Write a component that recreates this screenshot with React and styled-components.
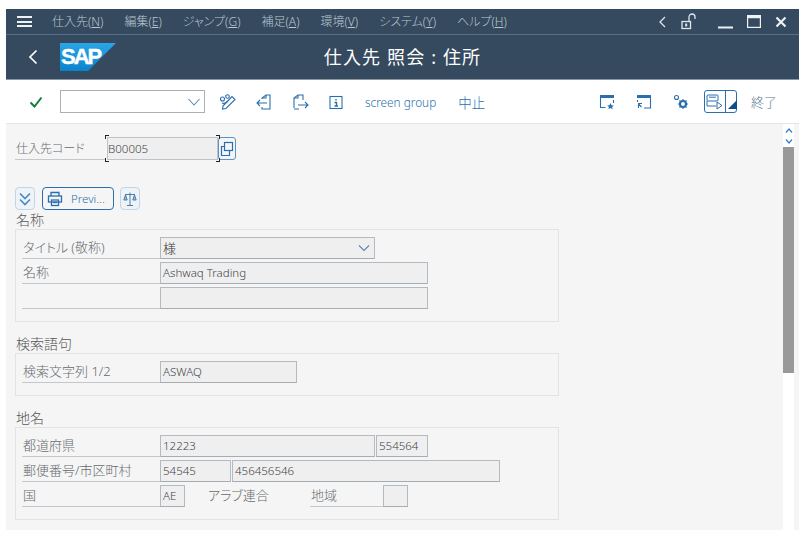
import styled, {createGlobalStyle} from 'styled-components';

const GlobalStyle = createGlobalStyle`
    html, body {
        margin: 0;
        padding: 0;
        background: #fff;
        font-family: "Noto Sans", "Noto Sans CJK JP", sans-serif;
        font-feature-settings: "palt";
    }
`;

const BLUE = "#2a6fad";

const Icon = ({w = 18, h = 18, vb = "0 0 18 18", color = BLUE, sw = 1.1, children}) => (
    <svg width={w} height={h} viewBox={vb} fill="none" stroke={color} strokeWidth={sw}>{children}</svg>
);

const menus = [["仕入先", "N"], ["編集", "E"], ["ジャンプ", "G"], ["補足", "A"], ["環境", "V"], ["システム", "Y"], ["ヘルプ", "H"]];

const App = () => {
    return (
        <Page>
            <GlobalStyle/>
            <Header>
                <MenuBar>
                    <Burger><i/><i/><i/></Burger>
                    <Menus>
                        {menus.map(([name, key]) => (
                            <MenuItem key={key}>{name}(<u>{key}</u>)</MenuItem>
                        ))}
                    </Menus>
                    <WindowControls>
                        <Icon w={12} h={16} vb="0 0 12 16" color="#dfe6ec" sw={1.3}><path d="M9 3 L4 8 L9 13"/></Icon>
                        <Lock>
                            <Icon w={18} h={18} color="#dfe6ec" sw={1.3}>
                                <rect x="2" y="8.5" width="8.5" height="7"/>
                                <path d="M6.2 10.5v3" strokeWidth="2"/>
                                <path d="M9 8.5V4a3 3 0 0 1 6 0v2"/>
                            </Icon>
                        </Lock>
                        <Icon w={15} h={15} vb="0 0 15 15" color="#eef2f5" sw={2}><path d="M0 13.5h15"/></Icon>
                        <Icon w={14} h={13} vb="0 0 14 13" color="#eef2f5" sw={1.2}><rect x="0.6" y="0.6" width="12.8" height="11.8"/><path d="M0 2h14" strokeWidth="2.5"/></Icon>
                        <Icon w={12} h={12} vb="0 0 12 12" color="#eef2f5" sw={2.2}><path d="M1.5 1.5l9 9M10.5 1.5l-9 9"/></Icon>
                    </WindowControls>
                </MenuBar>
                <TitleBar>
                    <TitleLeft>
                        <Icon w={12} h={18} vb="0 0 12 18" color="#fff" sw={1.7}><path d="M9.5 2.5 L3 9 L9.5 15.5"/></Icon>
                        <SapLogo width="56" height="28" viewBox="0 0 56 28">
                            <defs>
                                <linearGradient id="sap" x1="0" y1="0" x2="0" y2="1">
                                    <stop offset="0" stopColor="#2aa5e6"/>
                                    <stop offset="1" stopColor="#0a83cd"/>
                                </linearGradient>
                            </defs>
                            <polygon points="0,0 56,0 28,28 0,28" fill="url(#sap)"/>
                            <text x="1" y="21" fill="#fff" stroke="#fff" strokeWidth="0.4" fontFamily="Liberation Sans" fontWeight="700" fontSize="22" letterSpacing="-2">SAP</text>
                        </SapLogo>
                    </TitleLeft>
                    <Title>仕入先 照会 : 住所</Title>
                    <div/>
                </TitleBar>
            </Header>
            <Toolbar>
                <Check>
                    <Icon w={16} h={16} vb="0 0 16 16" color="#107e3e" sw={2}><path d="M2.5 8.5 L6.5 12.5 L13.5 3.5"/></Icon>
                </Check>
                <Combo>
                    <Icon w={14} h={10} vb="0 0 14 10" color="#5b88b5" sw={1.1}><path d="M1.5 2 L7 8 L12.5 2"/></Icon>
                </Combo>
                <ToolIcons>
                    <Icon vb="0 0 18 18">
                        <circle cx="3.5" cy="6" r="2"/><circle cx="8.5" cy="3.5" r="1.8"/>
                        <path d="M4 13 L13 3.5 L16 6.5 L7 15.5 L3.5 16 Z"/><path d="M3 10c2 1 4 0 6-2"/>
                    </Icon>
                    <Icon vb="0 0 18 18">
                        <path d="M7 6V5l4-3h4v14H7v-2"/><path d="M7 5h4V2"/><path d="M12 10H2M5 7l-3 3 3 3"/>
                    </Icon>
                    <Icon vb="0 0 18 18">
                        <path d="M3 15V5l4-3h5v5M8 16H3"/><path d="M3 5h4V2"/><path d="M7 12h10M14 9l3 3-3 3"/>
                    </Icon>
                    <Icon vb="0 0 18 18">
                        <rect x="3" y="3.5" width="12" height="12"/>
                        <path d="M9 6v1.5M7.5 9.5h2v3.5M7.5 13h3.5" strokeWidth="1.4"/>
                    </Icon>
                </ToolIcons>
                <ToolText $ml={20} $size={11.8}>screen group</ToolText>
                <ToolText $ml={22} $size={13.5}>中止</ToolText>
                <RightTools>
                    <Icon w={16} h={16} vb="0 0 16 16">
                        <path d="M1.5 2.5v11h5M14.5 6v3"/><path d="M1 2.5h14" strokeWidth="3"/>
                        <path d="M11.5 9l1 2.2 2.3.2-1.7 1.5.5 2.3-2.1-1.2-2.1 1.2.5-2.3-1.7-1.5 2.3-.2z" fill={BLUE} stroke="none"/>
                    </Icon>
                    <Icon w={16} h={16} vb="0 0 16 16">
                        <path d="M1.5 6v2M14.5 3v11H8"/><path d="M1 2.5h14" strokeWidth="3"/>
                        <path d="M6 9.5H2.5v4.5M2.5 10l3 3"/>
                    </Icon>
                    <Icon w={16} h={16} vb="0 0 16 16">
                        <circle cx="3.5" cy="3.5" r="2"/>
                        <circle cx="10" cy="10" r="3" strokeWidth="2.2"/>
                        <path d="M10 5v2M10 13v2M5 10h2M13 10h2M6.5 6.5l1.2 1.2M12.3 12.3l1.2 1.2M13.5 6.5l-1.2 1.2M7.7 12.3l-1.2 1.2"/>
                    </Icon>
                    <SplitButton>
                        <SplitMain>
                            <Icon w={20} h={18} vb="0 0 20 18" sw={1}>
                                <rect x="2" y="2" width="11" height="6" rx="1"/>
                                <path d="M4 4.2h7M2 8v5h9M12 9l5 3.5-5 3.5z"/>
                            </Icon>
                        </SplitMain>
                        <SplitArrow>
                            <svg width="9" height="9" viewBox="0 0 9 9"><polygon points="9,0 9,9 0,9" fill="#0a4f8a"/></svg>
                        </SplitArrow>
                    </SplitButton>
                    <ExitText>終了</ExitText>
                </RightTools>
            </Toolbar>
            <Body>
                <Content>
                    <CodeRow>
                        <Label $w={90} $size={12}>仕入先コード</Label>
                        <FocusField>B00005</FocusField>
                        <SearchHelp>
                            <Icon w={16} h={18} vb="0 0 16 18" sw={1.2}><rect x="5.5" y="2.5" width="8" height="8"/><path d="M5.5 6.5h-3v9h8v-5"/></Icon>
                        </SearchHelp>
                    </CodeRow>
                    <ActionRow>
                        <GhostButton $w={20}>
                            <Icon w={14} h={16} vb="0 0 14 16" sw={1.7} color="#4d8ac4"><path d="M2 2.5l5 5 5-5M2 8.5l5 5 5-5"/></Icon>
                        </GhostButton>
                        <PreviewButton>
                            <Icon w={16} h={16} vb="0 0 16 16" sw={1.3}>
                                <path d="M4 5V1.5h8V5"/><rect x="1.5" y="5" width="13" height="6"/><rect x="4.5" y="9" width="7" height="5.5"/><path d="M6 11.5h4"/>
                            </Icon>
                            <span>Previ...</span>
                        </PreviewButton>
                        <GhostButton $w={20}>
                            <Icon w={14} h={16} vb="0 0 14 16" sw={1} color="#4d7ea8">
                                <path d="M7 1.5v13M4 14.5h6M2 3.5h10"/><path d="M2.5 4L.8 9h3.4zM11.5 4 9.8 9h3.4z" fill="#9dbad3"/>
                            </Icon>
                        </GhostButton>
                    </ActionRow>

                    <Heading>名称</Heading>
                    <Group>
                        <Row>
                            <Label>タイトル (敬称)</Label>
                            <Select>
                                <span>様</span>
                                <Icon w={12} h={8} vb="0 0 12 8" color="#5b88b5" sw={1.1}><path d="M1 1.5 L6 6.5 L11 1.5"/></Icon>
                            </Select>
                        </Row>
                        <Row>
                            <Label>名称</Label>
                            <Field $w={268}>Ashwaq Trading</Field>
                        </Row>
                        <Row>
                            <Label/>
                            <Field $w={268}/>
                        </Row>
                    </Group>

                    <Heading $top={12}>検索語句</Heading>
                    <Group>
                        <Row>
                            <Label>検索文字列 1/2</Label>
                            <Field $w={137}>ASWAQ</Field>
                        </Row>
                    </Group>

                    <Heading $top={12}>地名</Heading>
                    <Group>
                        <Row>
                            <Label>都道府県</Label>
                            <Field $w={215}>12223</Field>
                            <Field $w={52} $ml={1}>554564</Field>
                        </Row>
                        <Row>
                            <Label>郵便番号/市区町村</Label>
                            <Field $w={71}>54545</Field>
                            <Field $w={268} $ml={1}>456456546</Field>
                        </Row>
                        <Row>
                            <Label>国</Label>
                            <Field $w={25}>AE</Field>
                            <Plain>アラブ連合</Plain>
                            <Label $w={73}>地域</Label>
                            <Field $w={25}/>
                        </Row>
                    </Group>
                </Content>
                <Scrollbar>
                    <ScrollButtons>
                        <Icon w={8} h={7} vb="0 0 8 7" color="#3d86c6" sw={1.4}><path d="M1 5.5 L4 2 L7 5.5"/></Icon>
                        <Icon w={8} h={7} vb="0 0 8 7" color="#3d86c6" sw={1.4}><path d="M1 1.5 L4 5 L7 1.5"/></Icon>
                    </ScrollButtons>
                    <ScrollThumb/>
                </Scrollbar>
                <Gutter/>
            </Body>
        </Page>
    );
};

export default App;

const Page = styled.div`
    width: 804px;
    height: 543px;
    box-sizing: border-box;
    padding: 9px 5px 13px 6px;
    display: flex;
    flex-direction: column;
    overflow: hidden;
`;

const Header = styled.header`
    background: #354a5f;
    flex: none;
`;

const MenuBar = styled.div`
    height: 25px;
    display: flex;
    align-items: center;
    border-bottom: 1px solid #55708b;
    padding-left: 11px;
`;

const Burger = styled.div`
    width: 15px;
    display: flex;
    flex-direction: column;
    gap: 2.5px;

    i {
        display: block;
        height: 2px;
        background: #eef2f5;
    }
`;

const Menus = styled.nav`
    display: flex;
    gap: 21px;
    margin-left: 20px;
`;

const MenuItem = styled.span`
    font-size: 12px;
    line-height: 16px;
    font-weight: 300;
    color: #b9c6d2;
    white-space: nowrap;
`;

const WindowControls = styled.div`
    margin-left: auto;
    display: flex;
    align-items: center;
    gap: 14px;
    padding-right: 12px;

    svg:first-child {
        margin-right: -2px;
    }

    svg:nth-child(3) {
        margin-left: 8px;
    }
`;

const Lock = styled.span`
    display: flex;
`;

const TitleBar = styled.div`
    height: 44px;
    display: grid;
    grid-template-columns: 1fr auto 1fr;
    align-items: center;
    border-bottom: 1px solid #8a98a6;
`;

const TitleLeft = styled.div`
    display: flex;
    align-items: center;
    padding-left: 21px;
    gap: 21px;
`;

const SapLogo = styled.svg`
    display: block;
`;

const Title = styled.h1`
    margin: 0 0 2px;
    font-size: 18px;
    font-weight: 400;
    color: #fff;
    letter-spacing: 1.15px;
    white-space: nowrap;
    font-feature-settings: normal;
`;

const Toolbar = styled.div`
    height: 43px;
    flex: none;
    display: flex;
    align-items: center;
    background: #fff;
    border-bottom: 1px solid #e5e5e5;
    padding-left: 22px;
`;

const Check = styled.span`
    display: flex;
    width: 32px;
`;

const Combo = styled.div`
    width: 145px;
    height: 23px;
    box-sizing: border-box;
    border: 1px solid #a9b0b6;
    display: flex;
    align-items: center;
    justify-content: flex-end;
    padding-right: 3px;
`;

const ToolIcons = styled.div`
    display: flex;
    align-items: center;
    gap: 18px;
    margin-left: 14px;
`;

const ToolText = styled.span`
    margin-left: ${props => props.$ml}px;
    font-size: ${props => props.$size}px;
    font-weight: 300;
    color: ${BLUE};
    white-space: nowrap;
`;

const RightTools = styled.div`
    margin-left: auto;
    display: flex;
    align-items: center;
    gap: 21px;
    padding-right: 22px;
`;

const SplitButton = styled.div`
    display: flex;
    width: 33px;
    height: 23px;
    box-sizing: border-box;
    border: 1px solid ${BLUE};
    border-radius: 3px;
    margin-left: -6px;
`;

const SplitMain = styled.div`
    flex: 1;
    display: flex;
    align-items: center;
    border-right: 1px solid ${BLUE};
`;

const SplitArrow = styled.div`
    width: 12px;
    display: flex;
    align-items: flex-end;
    padding: 0 0 3px 2px;
    box-sizing: border-box;
`;

const ExitText = styled.span`
    font-size: 13px;
    font-weight: 300;
    color: #5f7890;
    margin-left: -7px;
`;

const Body = styled.div`
    flex: 1;
    display: flex;
    min-height: 0;
`;

const Content = styled.main`
    flex: 1;
    background: #f5f5f5;
    padding: 13px 0 0 9px;
    min-width: 0;
`;

const CodeRow = styled.div`
    display: flex;
    align-items: center;
`;

const Label = styled.div`
    box-sizing: border-box;
    width: ${props => props.$w || 138}px;
    height: 22px;
    line-height: 21px;
    padding-left: 1px;
    font-size: ${props => props.$size || 13}px;
    font-weight: 300;
    color: #666a6e;
    border-bottom: 1px solid #c4c8cc;
    white-space: nowrap;
    flex: none;
`;

const FocusField = styled.div`
    position: relative;
    box-sizing: border-box;
    width: 111px;
    height: 23px;
    margin-left: 2px;
    line-height: 22px;
    padding-left: 0;
    font-size: 11.5px;
    font-weight: 300;
    color: #444;
    background: #efefef;
    border: 1px solid #bcc3ca;

    &::before {
        content: "";
        position: absolute;
        inset: -3px -3px;
        background:
            linear-gradient(#222, #222) 0 0 / 4px 1px no-repeat,
            linear-gradient(#222, #222) 0 0 / 1px 4px no-repeat,
            linear-gradient(#222, #222) 100% 0 / 4px 1px no-repeat,
            linear-gradient(#222, #222) 100% 0 / 1px 4px no-repeat,
            linear-gradient(#222, #222) 0 100% / 4px 1px no-repeat,
            linear-gradient(#222, #222) 0 100% / 1px 4px no-repeat,
            linear-gradient(#222, #222) 100% 100% / 4px 1px no-repeat,
            linear-gradient(#222, #222) 100% 100% / 1px 4px no-repeat;
    }
`;

const SearchHelp = styled.button`
    box-sizing: border-box;
    width: 18px;
    height: 23px;
    padding: 0;
    display: flex;
    align-items: center;
    justify-content: center;
    background: transparent;
    border: 1px solid #5b93c4;
    border-radius: 3px;
`;

const ActionRow = styled.div`
    display: flex;
    align-items: center;
    gap: 6px;
    margin-top: 27px;
`;

const GhostButton = styled.button`
    box-sizing: border-box;
    width: ${props => props.$w}px;
    height: 23px;
    padding: 0;
    display: flex;
    align-items: center;
    justify-content: center;
    background: #eef3f7;
    border: 1px solid #c0d5e6;
    border-radius: 4px;
`;

const PreviewButton = styled.button`
    box-sizing: border-box;
    width: 72px;
    height: 23px;
    margin-left: 1px;
    padding: 0 0 0 4px;
    display: flex;
    align-items: center;
    gap: 8px;
    background: transparent;
    border: 1px solid ${BLUE};
    border-radius: 4px;
    font-family: inherit;
    font-size: 11.5px;
    font-weight: 300;
    color: ${BLUE};
`;

const Heading = styled.h2`
    margin: ${props => props.$top || 0}px 0 0 1px;
    font-size: 14px;
    line-height: 19px;
    font-weight: 300;
    color: #555;
`;

const Group = styled.section`
    box-sizing: border-box;
    width: 544px;
    border: 1px solid #e3e3e3;
    padding: 7px 0 12px 6px;
    display: flex;
    flex-direction: column;
    gap: 3px;
`;

const Row = styled.div`
    display: flex;
    align-items: flex-end;
`;

const fieldBase = `
    box-sizing: border-box;
    height: 22px;
    line-height: 20px;
    padding-left: 2px;
    font-size: 11.5px;
    font-weight: 300;
    color: #3f4347;
    background: #efefef;
    border: 1px solid #b3bac1;
    border-bottom-color: #a4acb4;
    white-space: nowrap;
    flex: none;
`;

const Field = styled.div`
    ${fieldBase}
    width: ${props => props.$w}px;
    margin-left: ${props => props.$ml || 0}px;
`;

const Select = styled.div`
    ${fieldBase}
    width: 215px;
    font-size: 13px;
    color: #333;
    display: flex;
    align-items: center;
    justify-content: space-between;
    padding-right: 4px;
`;

const Plain = styled.span`
    width: 125px;
    height: 22px;
    padding-left: 23px;
    box-sizing: border-box;
    font-size: 13px;
    line-height: 21px;
    font-weight: 300;
    color: #666a6e;
    flex: none;
`;

const Scrollbar = styled.div`
    width: 11px;
    background: #fff;
    display: flex;
    flex-direction: column;
    flex: none;
`;

const ScrollButtons = styled.div`
    height: 23px;
    display: flex;
    flex-direction: column;
    align-items: center;
    justify-content: center;
    gap: 4px;
`;

const ScrollThumb = styled.div`
    height: 226px;
    background: #999;
`;

const Gutter = styled.div`
    width: 5px;
    background: #f5f5f5;
    flex: none;
`;
